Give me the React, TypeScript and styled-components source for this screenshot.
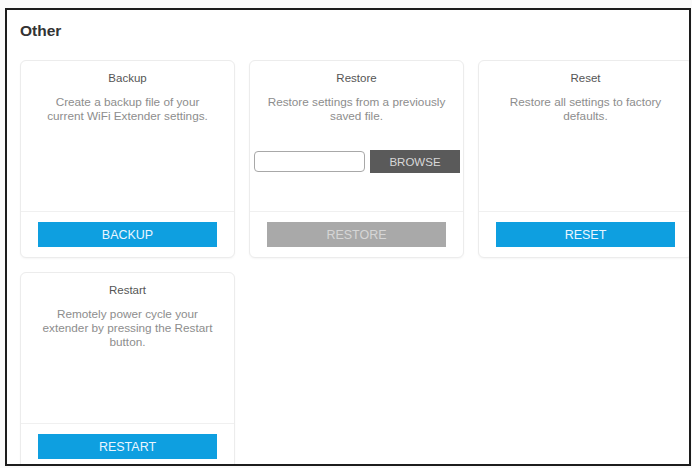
import React from "react"
import styled, { createGlobalStyle } from "styled-components"

const GlobalStyle = createGlobalStyle`
    html, body {
        margin: 0;
        padding: 0;
        background: #fafafa;
    }
    body {
        font-family: 'Liberation Sans', Arial, sans-serif;
        -webkit-font-smoothing: antialiased;
    }
`

const Frame = styled.div`
    box-sizing: border-box;
    margin: 8px 1px 0 5px;
    width: 686px;
    height: 458px;
    border: 2px solid #1c1c1c;
    background: #fff;
    overflow: hidden;
    padding: 12px 0 0 13px;
`

const Heading = styled.h2`
    margin: 0 0 20px 0;
    font-size: 15.5px;
    line-height: 18px;
    font-weight: 700;
    color: #333;
`

const Grid = styled.div`
    display: grid;
    grid-template-columns: repeat(3, 215px);
    column-gap: 14px;
    row-gap: 14px;
    width: 700px;
`

const Card = styled.section`
    box-sizing: border-box;
    height: 198px;
    border: 1px solid #ececec;
    border-radius: 6px;
    box-shadow: 0 1px 2px rgba(0, 0, 0, 0.04);
    display: flex;
    flex-direction: column;
    background: #fff;
`

const Body = styled.div`
    flex: 1;
    padding-top: 9px;
    text-align: center;
`

const Title = styled.h3`
    margin: 0;
    font-size: 11.5px;
    line-height: 16px;
    font-weight: 400;
    color: #555;
`

const Desc = styled.p`
    margin: 9px 0 0;
    padding: 0 16px;
    font-size: 11.75px;
    line-height: 14px;
    color: #8d8d8d;
`

const FileRow = styled.div`
    display: flex;
    align-items: center;
    gap: 5px;
    margin-top: 27px;
    padding: 0 3px 0 4px;
`

const FileInput = styled.div`
    box-sizing: border-box;
    width: 111px;
    height: 21px;
    border: 1px solid #a8a8a8;
    border-radius: 4px;
    background: #fff;
`

const Browse = styled.button`
    width: 90px;
    height: 23px;
    border: none;
    background: #5a5a5a;
    color: #d8d8d8;
    font-family: inherit;
    font-size: 11.5px;
    padding: 0;
`

const Footer = styled.div`
    border-top: 1px solid #f0f0f0;
    padding: 10px 17px 10px;
    display: flex;
    justify-content: center;
`

const Action = styled.button<{ $disabled?: boolean }>`
    width: 180px;
    height: 25px;
    border: none;
    padding: 0;
    background: ${p => p.$disabled ? '#a9a9a9' : '#0e9fe0'};
    color: ${p => p.$disabled ? '#d6d6d6' : '#eaf6ff'};
    font-family: inherit;
    font-size: 12.5px;
    text-transform: uppercase;
`

type Item = {
    title: string
    text: string
    action: string
    file?: boolean
    disabled?: boolean
}

const items: Item[] = [
    { title: 'Backup', text: 'Create a backup file of your current WiFi Extender settings.', action: 'Backup' },
    { title: 'Restore', text: 'Restore settings from a previously saved file.', action: 'Restore', file: true, disabled: true },
    { title: 'Reset', text: 'Restore all settings to factory defaults.', action: 'Reset' },
    { title: 'Restart', text: 'Remotely power cycle your extender by pressing the Restart button.', action: 'Restart' },
]

const App = () => {
    return (
        <>
            <GlobalStyle />
            <Frame>
                <Heading>Other</Heading>
                <Grid>
                    {items.map(item =>
                        <Card key={item.title}>
                            <Body>
                                <Title>{item.title}</Title>
                                <Desc>{item.text}</Desc>
                                {item.file &&
                                    <FileRow>
                                        <FileInput />
                                        <Browse>BROWSE</Browse>
                                    </FileRow>
                                }
                            </Body>
                            <Footer>
                                <Action $disabled={item.disabled}>{item.action}</Action>
                            </Footer>
                        </Card>
                    )}
                </Grid>
            </Frame>
        </>
    )
}

export default App
